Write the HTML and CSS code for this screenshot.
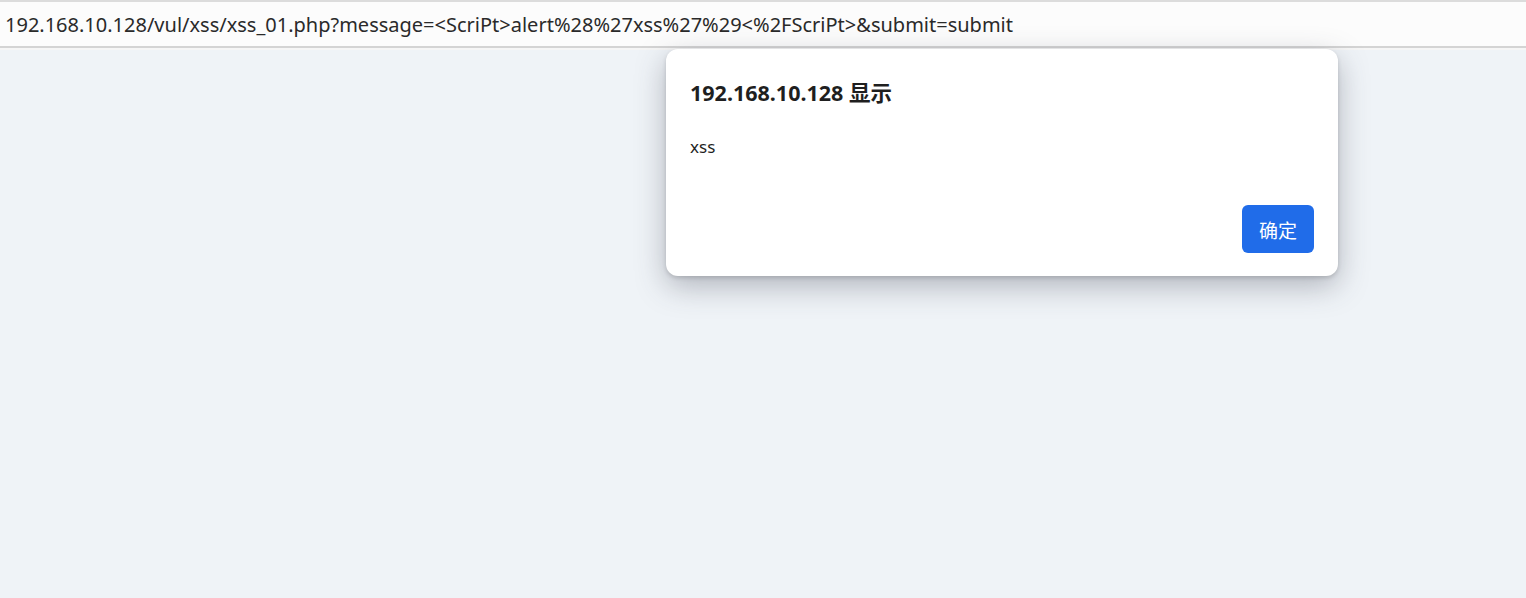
FILE: index.html
```html
<!DOCTYPE html>
<html lang="zh-CN">
<head>
    <meta charset="UTF-8">
    <title>xss_01</title>
    <link rel="stylesheet" href="styles.css">
</head>
<body>
    <div class="address-bar">
        <span class="url">192.168.10.128/vul/xss/xss_01.php?message=&lt;ScriPt&gt;alert%28%27xss%27%29&lt;%2FScriPt&gt;&amp;submit=submit</span>
    </div>
    <div class="page"></div>

    <div class="dialog">
        <h2 class="dialog-title">192.168.10.128 显示</h2>
        <p class="dialog-msg">xss</p>
        <div class="dialog-actions">
            <button class="btn-ok">确定</button>
        </div>
    </div>
</body>
</html>
```

FILE: styles.css
```css
html, body {
    margin: 0;
    height: 100%;
}
body {
    display: flex;
    flex-direction: column;
    background: #eff3f7;
    font-family: "Noto Sans", "Noto Sans CJK SC", sans-serif;
    overflow: hidden;
}
.address-bar {
    height: 44px;
    border-top: 2px solid #dcdcdc;
    border-bottom: 2px solid #d4d4d4;
    background: #fcfcfc;
    display: flex;
    align-items: center;
    padding-left: 5px;
    box-shadow: 0 2px 0 #f6f6f6;
}
.url {
    font-size: 20px;
    color: #2a2a2a;
}
.page {
    flex: 1;
}

.dialog {
    position: absolute;
    top: 49px;
    left: 666px;
    width: 624px;
    height: 180px;
    padding: 24px 24px 23px 24px;
    background: #fff;
    border-radius: 12px;
    box-shadow: 0 10px 30px rgba(60, 64, 80, 0.35), 0 2px 4px rgba(0, 0, 0, 0.15);
    display: flex;
    flex-direction: column;
}
.dialog-title {
    margin: 4px 0 0;
    font-size: 21.5px;
    font-weight: bold;
    color: #1f1f1f;
    line-height: 32px;
}
.dialog-msg {
    margin: 26px 0 0;
    font-size: 17px;
    color: #1f1f1f;
    line-height: 24px;
}
.dialog-actions {
    margin-top: auto;
    display: flex;
    justify-content: flex-end;
}
.btn-ok {
    width: 72px;
    height: 48px;
    border: none;
    border-radius: 6px;
    background: #206ce9;
    color: #fff;
    font-family: "Noto Sans CJK SC", sans-serif;
    font-size: 19px;
    padding: 0;
}
```
